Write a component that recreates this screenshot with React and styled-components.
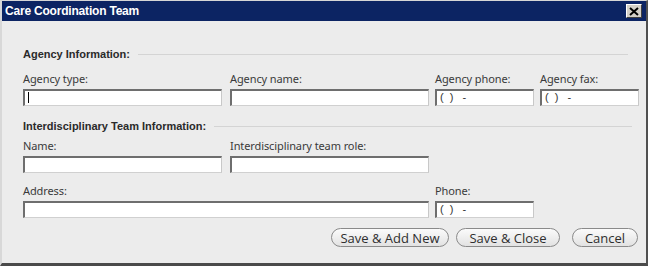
import React from "react";
import styled, { createGlobalStyle } from "styled-components";

const Global = createGlobalStyle`
  html, body { margin: 0; padding: 0; background: #ffffff; }
  body { width: 648px; height: 266px; overflow: hidden; }
`;

const Window = styled.div`
  box-sizing: border-box;
  width: 648px;
  height: 266px;
  background: #ececec;
  border-top: 1px solid #d6d6d6;
  border-left: 2px solid #d8d8d8;
  border-right: 2px solid #505050;
  border-bottom: 3px solid #4a4a4a;
  display: flex;
  flex-direction: column;
`;

const TitleBar = styled.div`
  height: 20px;
  background: #0c2463;
  display: flex;
  align-items: center;
  justify-content: space-between;
  padding: 0 4px 0 3px;
  color: #ffffff;
  font-family: Tahoma, "Liberation Sans", sans-serif;
  font-weight: bold;
  font-size: 12px;
  letter-spacing: -0.2px;
`;

const CloseBox = styled.div`
  box-sizing: border-box;
  width: 16px;
  height: 14px;
  background: #d4d0c8;
  border: 1px solid;
  border-color: #ffffff #404040 #404040 #ffffff;
  display: flex;
  align-items: center;
  justify-content: center;
`;

const Body = styled.div`
  flex: 1;
  padding: 26px 8px 0 21px;
  font-family: "Noto Sans", "Open Sans", sans-serif;
  color: #333333;
`;

const Section = styled.div`
  display: flex;
  align-items: center;
  height: 14px;
  margin-top: ${(p) => p.$top || 0}px;
  font-family: Tahoma, "Liberation Sans", sans-serif;
  font-weight: bold;
  font-size: 11px;
  color: #2a2a2a;
  &::after {
    content: "";
    flex: 1;
    height: 1px;
    margin: 0 ${(p) => p.$end || 10}px 0 8px;
    background: #d4d4d4;
  }
`;

const Grid = styled.div`
  display: grid;
  grid-template-columns: 207px 205px 105px 99px;
  margin-top: ${(p) => p.$top || 0}px;
`;

const Field = styled.div`
  display: flex;
  flex-direction: column;
  grid-column: ${(p) => p.$col || "auto"};
`;

const Label = styled.label`
  height: 14px;
  line-height: 14px;
  font-size: 11px;
  color: #3a3a3a;
  margin-bottom: 3px;
  letter-spacing: -0.1px;
`;

const Input = styled.div`
  box-sizing: border-box;
  width: ${(p) => p.$w}px;
  height: 17px;
  background: #ffffff;
  border: 1px solid;
  border-width: 2px 1px 1px 2px;
  border-color: #6e6e6e #c8c8c8 #d0d0d0 #6e6e6e;
  font-family: "Liberation Sans", Arial, sans-serif;
  font-size: 11px;
  line-height: 13px;
  padding-left: 3px;
  color: #333;
  white-space: pre;
`;

const Caret = styled.span`
  display: inline-block;
  width: 1px;
  height: 11px;
  margin-top: 1px;
  background: #000;
`;

const Buttons = styled.div`
  display: flex;
  justify-content: flex-end;
  gap: 7px;
  margin-top: 10px;
`;

const Button = styled.button`
  box-sizing: border-box;
  width: ${(p) => p.$w}px;
  height: 19px;
  border: 1px solid #8a8a8a;
  border-radius: 10px;
  background: linear-gradient(#fbfbfb, #e2e2e2);
  font-family: "Open Sans", "Noto Sans", sans-serif;
  font-size: 13px;
  color: #2e2e2e;
  padding: 0;
  line-height: 16px;
  margin-left: ${(p) => p.$ml || 0}px;
`;

const phone = "(  )   -";

export default function App() {
  return (
    <>
      <Global />
      <Window>
        <TitleBar>
          <span>Care Coordination Team</span>
          <CloseBox>
            <svg width="10" height="9" viewBox="0 0 10 9">
              <path d="M1 1 L9 8 M9 1 L1 8" stroke="#000" strokeWidth="2" />
            </svg>
          </CloseBox>
        </TitleBar>
        <Body>
          <Section $end={10}>Agency Information:</Section>
          <Grid $top={11}>
            <Field>
              <Label>Agency type:</Label>
              <Input $w={199}>
                <Caret />
              </Input>
            </Field>
            <Field>
              <Label>Agency name:</Label>
              <Input $w={199} />
            </Field>
            <Field>
              <Label>Agency phone:</Label>
              <Input $w={99}>{phone}</Input>
            </Field>
            <Field>
              <Label>Agency fax:</Label>
              <Input $w={99}>{phone}</Input>
            </Field>
          </Grid>
          <Section $top={13} $end={6}>
            Interdisciplinary Team Information:
          </Section>
          <Grid $top={6}>
            <Field>
              <Label>Name:</Label>
              <Input $w={199} />
            </Field>
            <Field>
              <Label>Interdisciplinary team role:</Label>
              <Input $w={199} />
            </Field>
          </Grid>
          <Grid $top={11}>
            <Field $col="1 / 3">
              <Label>Address:</Label>
              <Input $w={406} />
            </Field>
            <Field>
              <Label>Phone:</Label>
              <Input $w={99}>{phone}</Input>
            </Field>
          </Grid>
          <Buttons>
            <Button $w={118}>Save &amp; Add New</Button>
            <Button $w={104}>Save &amp; Close</Button>
            <Button $w={66} $ml={5}>Cancel</Button>
          </Buttons>
        </Body>
      </Window>
    </>
  );
}
